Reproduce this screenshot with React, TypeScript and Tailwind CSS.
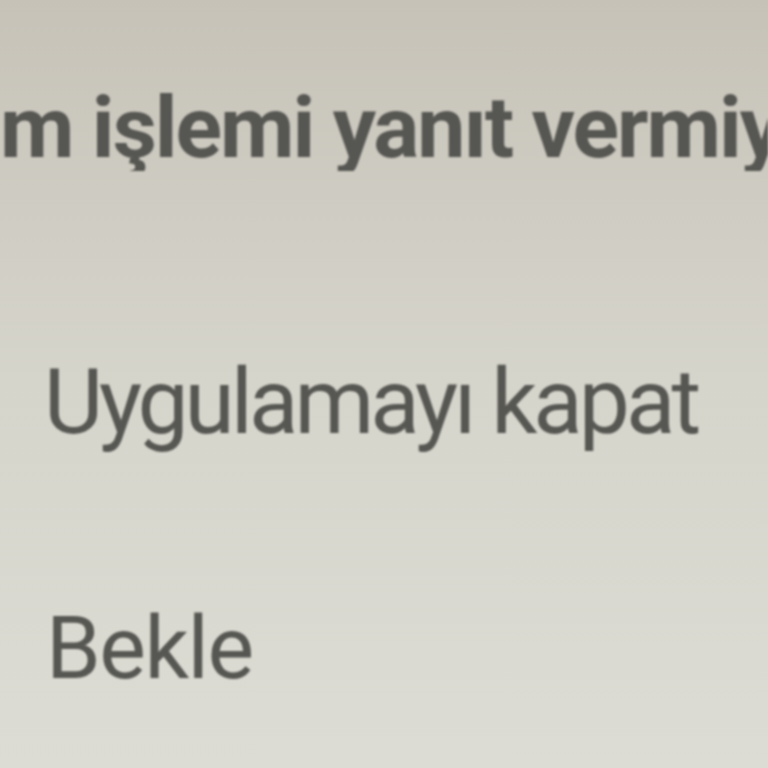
export default function App() {
  return (
    <div className="h-[768px] w-[768px] overflow-hidden bg-gradient-to-b from-[#c6c2b8] via-[#d6d5cc] to-[#dddcd4] font-['Roboto',sans-serif] text-[#565652]">
      <div className="flex flex-col blur-[0.8px]">
        {/* Title, cut off on both sides in the photo */}
        <h1 className="overflow-hidden whitespace-nowrap pt-[85px] text-[86px] font-bold leading-none tracking-[-2px]">
          m işlemi yanıt vermiyor
        </h1>

        {/* Options */}
        <button className="mt-[186px] pl-[44px] text-left text-[91px] leading-none tracking-[-4px]">
          Uygulamayı kapat
        </button>
        <button className="mt-[156px] pl-[46px] text-left text-[88px] leading-none tracking-[-1.5px]">
          Bekle
        </button>
      </div>
    </div>
  )
}
